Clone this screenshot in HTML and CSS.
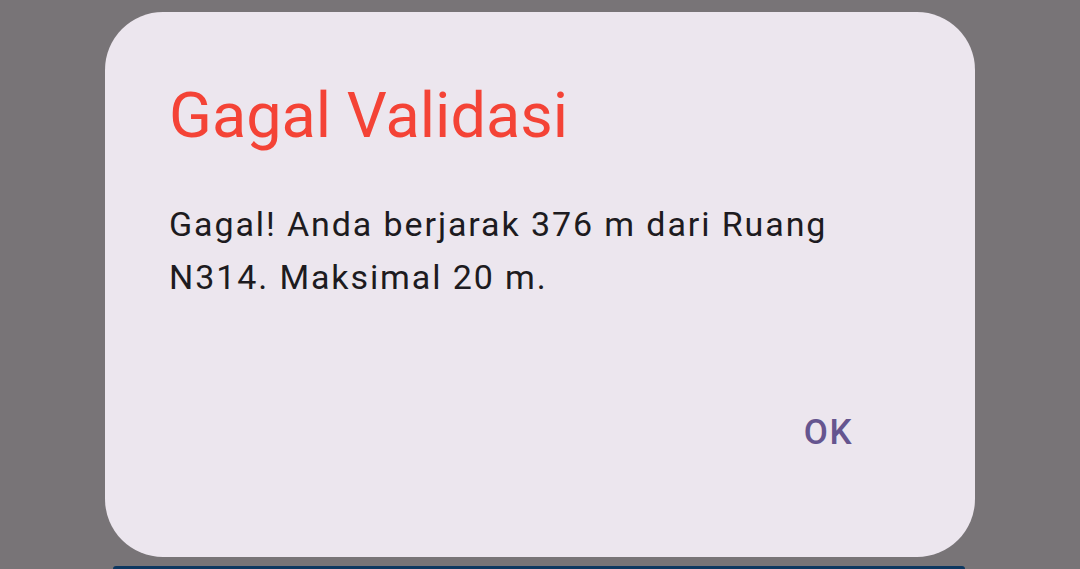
FILE: index.html
```html
<!DOCTYPE html>
<html lang="id">
<head>
    <meta charset="UTF-8">
    <meta name="viewport" content="width=device-width, initial-scale=1.0">
    <title>Gagal Validasi</title>
    <link rel="stylesheet" href="styles.css">
</head>
<body>
    <div class="scrim">
        <div class="dialog">
            <h2 class="dialog-title">Gagal Validasi</h2>
            <p class="dialog-content">Gagal! Anda berjarak 376 m dari Ruang N314. Maksimal 20 m.</p>
            <div class="dialog-actions">
                <button type="button" class="dialog-btn">OK</button>
            </div>
        </div>
        <div class="behind-button"></div>
    </div>
</body>
</html>
```

FILE: styles.css
```css
* {
    margin: 0;
    padding: 0;
    box-sizing: border-box;
    font-family: 'Roboto', 'Noto Sans', sans-serif;
}

body {
    background: #787477;
    width: 1080px;
    height: 569px;
    overflow: hidden;
}

.scrim {
    display: flex;
    flex-direction: column;
    align-items: flex-start;
    padding-top: 12px;
}

.dialog {
    background: #ece6ee;
    margin-left: 105px;
    width: 870px;
    height: 545px;
    border-radius: 58px;
    padding: 72px 65px 0 64px;
    display: flex;
    flex-direction: column;
}

.dialog-title {
    color: #f44336;
    font-size: 63px;
    font-weight: 400;
    line-height: 1;
    margin-bottom: 51px;
}

.dialog-content {
    color: #1d1b20;
    font-size: 34px;
    line-height: 53px;
    letter-spacing: 1.9px;
    width: 700px;
}

.dialog-actions {
    display: flex;
    justify-content: flex-end;
    margin-top: 108px;
    padding-right: 57px;
}

.dialog-btn {
    background: none;
    border: none;
    color: #65558f;
    font-size: 35px;
    font-weight: 500;
    letter-spacing: 1.5px;
}

.behind-button {
    background: #0d3760;
    margin-left: 113px;
    margin-top: 9px;
    width: 852px;
    height: 3px;
    border-radius: 30px 30px 0 0;
}
```
